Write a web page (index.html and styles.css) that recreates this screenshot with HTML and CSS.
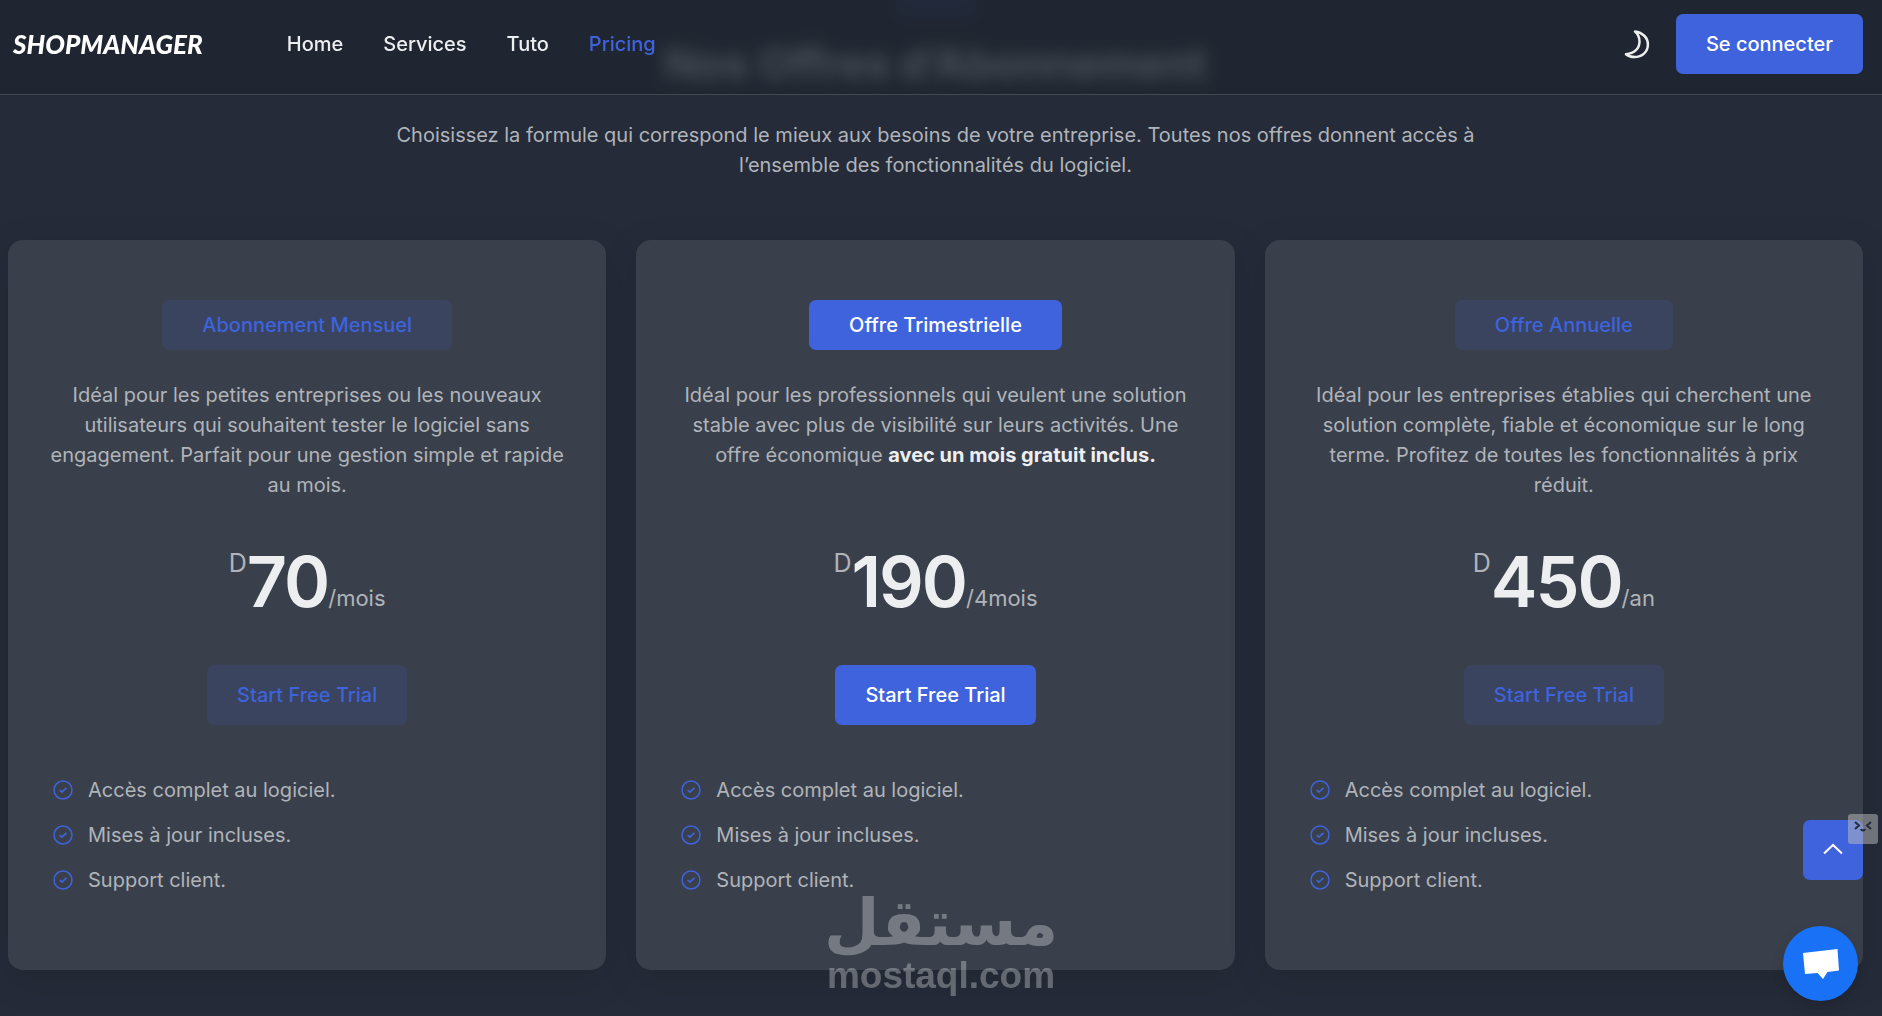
FILE: index.html
```html
<!DOCTYPE html>
<html lang="fr">
<head>
  <meta charset="UTF-8">
  <meta name="viewport" content="width=device-width, initial-scale=1">
  <title>ShopManager - Pricing</title>
  <link rel="stylesheet" href="styles.css">
</head>
<body>

<svg class="sprite" aria-hidden="true">
  <symbol id="check" viewBox="0 0 20 20">
    <circle cx="10" cy="10" r="9" fill="none" stroke="currentColor" stroke-width="1.5"/>
    <path d="M6.7 10.1l2.2 2 4.6-4.3" fill="none" stroke="currentColor" stroke-width="1.7"/>
  </symbol>
</svg>

<header class="header">
  <a href="#" class="logo">SHOPMANAGER</a>
  <nav class="nav">
    <a href="#">Home</a>
    <a href="#">Services</a>
    <a href="#">Tuto</a>
    <a href="#" class="active">Pricing</a>
  </nav>
  <button type="button" class="theme-toggle" aria-label="Thème">
    <svg width="26" height="30" viewBox="0 0 26 30">
      <path d="M11 2.500C18.500 3.500 23.900 8.500 23.900 15.500 23.900 23 18 28 10.500 28 7 28 4 27 2 25.200 10.500 24.500 15.500 19.500 15.500 12.500 15.500 8.500 14 5 11 2.500Z" fill="none" stroke="currentColor" stroke-width="2.500" stroke-linejoin="round"/>
    </svg>
  </button>
  <a href="#" class="btn btn-primary">Se connecter</a>
</header>

<main class="pricing">
  <div class="section-title">
    <span class="section-tag"></span>
    <h2>Nos Offres d’Abonnement</h2>
    <p>Choisissez la formule qui correspond le mieux aux besoins de votre entreprise. Toutes nos offres donnent accès à l’ensemble des fonctionnalités du logiciel.</p>
  </div>

  <div class="plans">
    <article class="plan">
      <h3 class="plan-name">Abonnement Mensuel</h3>
      <p class="plan-text">Idéal pour les petites entreprises ou les nouveaux utilisateurs qui souhaitent tester le logiciel sans engagement. Parfait pour une gestion simple et rapide au mois.</p>
      <div class="price"><span class="currency">D</span><span class="amount">70</span><span class="period">/mois</span></div>
      <a href="#" class="btn btn-soft">Start Free Trial</a>
      <ul class="features">
        <li><svg><use href="#check"/></svg>Accès complet au logiciel.</li>
        <li><svg><use href="#check"/></svg>Mises à jour incluses.</li>
        <li><svg><use href="#check"/></svg>Support client.</li>
      </ul>
    </article>

    <article class="plan featured">
      <h3 class="plan-name">Offre Trimestrielle</h3>
      <p class="plan-text">Idéal pour les professionnels qui veulent une solution stable avec plus de visibilité sur leurs activités. Une offre économique <strong>avec un mois gratuit inclus.</strong></p>
      <div class="price"><span class="currency">D</span><span class="amount">190</span><span class="period">/4mois</span></div>
      <a href="#" class="btn btn-primary">Start Free Trial</a>
      <ul class="features">
        <li><svg><use href="#check"/></svg>Accès complet au logiciel.</li>
        <li><svg><use href="#check"/></svg>Mises à jour incluses.</li>
        <li><svg><use href="#check"/></svg>Support client.</li>
      </ul>
    </article>

    <article class="plan">
      <h3 class="plan-name">Offre Annuelle</h3>
      <p class="plan-text">Idéal pour les entreprises établies qui cherchent une solution complète, fiable et économique sur le long terme. Profitez de toutes les fonctionnalités à prix réduit.</p>
      <div class="price"><span class="currency">D</span><span class="amount">450</span><span class="period">/an</span></div>
      <a href="#" class="btn btn-soft">Start Free Trial</a>
      <ul class="features">
        <li><svg><use href="#check"/></svg>Accès complet au logiciel.</li>
        <li><svg><use href="#check"/></svg>Mises à jour incluses.</li>
        <li><svg><use href="#check"/></svg>Support client.</li>
      </ul>
    </article>
  </div>
</main>

<div class="watermark">
  <span class="watermark-ar" lang="ar" dir="rtl">مستقل</span>
  <span class="watermark-en">mostaql.com</span>
</div>

<button type="button" class="to-top" aria-label="Haut de page">
  <svg width="20" height="12" viewBox="0 0 20 12">
    <path d="M1 10.500L10 2l9 8.500" fill="none" stroke="currentColor" stroke-width="2"/>
  </svg>
</button>

<div class="face">
  <svg width="20" height="12" viewBox="0 0 20 12" fill="none" stroke="currentColor" stroke-width="2">
    <path d="M2 1l4 3.500L2 8M18 1l-4 3.500L18 8M8 8c.5 2 3.500 2 4 0"/>
  </svg>
</div>

<button type="button" class="chat" aria-label="Chat">
  <svg width="38" height="32" viewBox="0 0 38 32">
    <path d="M1 5l34.500-4L37 22.500l-11.500 1.400L21 31l-5.500-6L3 26z" fill="#fff"/>
  </svg>
</button>

</body>
</html>
```

FILE: styles.css
```css
* {
  box-sizing: border-box;
}

body {
  margin: 0;
  background-color: #252b38;
  color: #b0b4ba;
  font-family: Inter, sans-serif;
  font-size: 20px;
  line-height: 30px;
}

a {
  color: inherit;
  text-decoration: none;
}

button {
  border: none;
  padding: 0;
  cursor: pointer;
}

.sprite {
  display: none;
}

/* header */
.header {
  position: fixed;
  top: 0;
  left: 0;
  right: 0;
  z-index: 10;
  display: flex;
  align-items: center;
  padding: 14px 19px 20px 13px;
  background-color: rgba(31, 37, 48, 0.8);
  border-bottom: 1px solid #43484f;
  backdrop-filter: blur(8px);
}

.logo {
  color: #fff;
  font-family: "Liberation Sans Narrow", Lato, sans-serif;
  font-size: 26px;
  font-weight: 900;
  font-style: italic;
}

.nav {
  display: flex;
  gap: 40px;
  margin-left: 84px;
  color: #edeef0;
  font-weight: 500;
}

.nav .active {
  color: #3e63dd;
}

.theme-toggle {
  display: flex;
  margin-left: auto;
  margin-right: 26px;
  background: none;
  color: #edeef0;
}

.btn {
  padding: 15px 30px;
  border-radius: 7px;
  font-weight: 500;
}

.btn-primary {
  background-color: #3e63dd;
  color: #fff;
}

.btn-soft {
  background-color: rgba(62, 99, 221, 0.13);
  color: #3e63dd;
}

/* pricing */
.pricing {
  padding: 0 19px 40px 8px;
}

.section-title {
  display: flex;
  flex-direction: column;
  align-items: center;
  margin-bottom: 60px;
  text-align: center;
}

.section-tag {
  width: 80px;
  height: 15px;
  background-color: rgba(62, 99, 221, 0.3);
}

.section-title h2 {
  margin: 18px 0 12px;
  color: #edeef0;
  font-size: 43px;
  font-weight: 700;
  line-height: 60px;
}

.section-title p {
  max-width: 1100px;
  margin: 15px 0 0;
}

.plans {
  display: grid;
  grid-template-columns: repeat(3, 1fr);
  gap: 30px;
}

.plan {
  display: flex;
  flex-direction: column;
  align-items: center;
  padding: 60px 40px;
  border-radius: 15px;
  background-color: #3a404b;
  box-shadow: 0 10px 40px rgba(0, 0, 0, 0.1);
}

.plan-name {
  margin: 0 0 30px;
  padding: 10px 40px;
  border-radius: 7px;
  background-color: rgba(62, 99, 221, 0.13);
  color: #3e63dd;
  font-size: 20px;
  font-weight: 500;
}

.featured .plan-name {
  background-color: #3e63dd;
  color: #fff;
}

.plan-text {
  min-height: 120px;
  margin: 0 0 46px;
  text-align: center;
}

.plan-text strong {
  color: #edeef0;
}

.price {
  display: flex;
  margin-bottom: 47px;
  line-height: 72px;
}

.currency {
  font-size: 25px;
  line-height: 34px;
}

.amount {
  color: #edeef0;
  font-size: 70px;
  font-weight: 600;
  letter-spacing: -2px;
}

.period {
  align-self: flex-end;
  font-size: 22px;
  line-height: 40px;
}

.features {
  align-self: stretch;
  display: flex;
  flex-direction: column;
  gap: 15px;
  margin: 50px 0 0;
  padding: 0 5px 15px;
  list-style: none;
}

.features li {
  display: flex;
  align-items: center;
  gap: 15px;
}

.features svg {
  width: 20px;
  height: 20px;
  color: #3e63dd;
}

/* floating items */
.watermark {
  position: fixed;
  left: 50%;
  bottom: 20px;
  display: flex;
  flex-direction: column;
  align-items: center;
  transform: translateX(-50%);
  color: #fff;
  opacity: 0.3;
}

.watermark-ar {
  font-family: "DejaVu Sans", sans-serif;
  font-size: 64px;
  font-weight: 700;
  line-height: 66px;
}

.watermark-en {
  font-family: "Liberation Sans", sans-serif;
  font-size: 37px;
  font-weight: 700;
  line-height: 40px;
}

.to-top {
  position: fixed;
  right: 19px;
  bottom: 136px;
  width: 60px;
  height: 60px;
  border-radius: 7px;
  background-color: #3e63dd;
  color: #fff;
}

.face {
  position: fixed;
  right: 4px;
  bottom: 172px;
  display: flex;
  justify-content: center;
  width: 30px;
  height: 30px;
  padding-top: 7px;
  border-radius: 3px;
  background-color: rgba(190, 190, 190, 0.5);
  color: #252b38;
}

.chat {
  position: fixed;
  right: 24px;
  bottom: 15px;
  display: flex;
  justify-content: center;
  align-items: center;
  width: 75px;
  height: 75px;
  border-radius: 50%;
  background-color: #1972f5;
  box-shadow: 0 4px 12px rgba(0, 0, 0, 0.15);
}
```
